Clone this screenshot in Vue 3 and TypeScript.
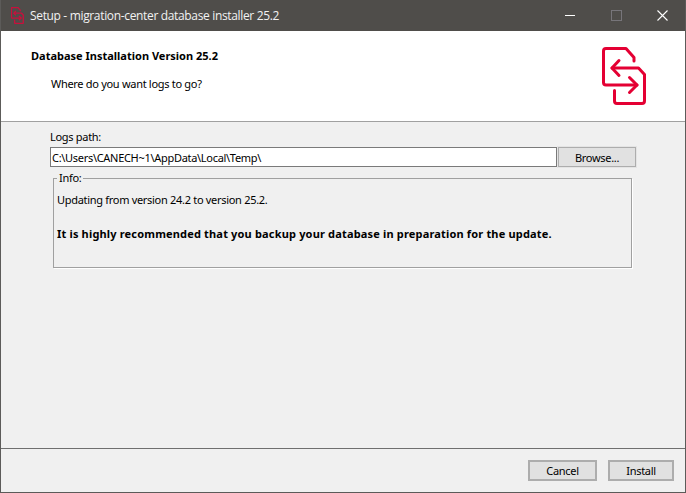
<script setup lang="ts">
import { ref } from 'vue';

const logsPath = ref('C:\\Users\\CANECH~1\\AppData\\Local\\Temp\\');

const firstDoc = 'M32 14 V10.5 L24 1.5 H4 Q1.5 1.5 1.5 4 V35.5 Q1.5 38 4 38 H35';
const firstArrow = 'M27.5 30.5 L35 38 L27.5 45.5';
const secondDoc = 'M10 21 H36.5 L42.5 27.5 V54 Q42.5 56.5 40 56.5 H15 Q12.5 56.5 12.5 54 V43.5';
const secondArrow = 'M17 13.5 L10 21 L17 28.5';
</script>

<template>
    <div class="window">
        <div class="titlebar">
            <svg class="app-icon" viewBox="0 0 45 58" fill="none" stroke="#c8103c" stroke-width="4.6">
                <path :d="firstDoc" />
                <path :d="firstArrow" />
                <path :d="secondDoc" />
                <path :d="secondArrow" />
            </svg>
            <span class="title">Setup - migration-center database installer 25.2</span>
            <div class="controls">
                <div class="control"><span class="minimize"></span></div>
                <div class="control"><span class="maximize"></span></div>
                <div class="control">
                    <svg class="close" viewBox="0 0 11 11" stroke="#fff" stroke-width="1.1">
                        <path d="M0.5 0.5 L10.5 10.5 M10.5 0.5 L0.5 10.5" />
                    </svg>
                </div>
            </div>
        </div>

        <div class="header">
            <div class="header-text">
                <div class="heading">Database Installation Version 25.2</div>
                <div class="subheading">Where do you want logs to go?</div>
            </div>
            <svg class="logo" viewBox="0 0 45 58" fill="none" stroke="#e40033" stroke-width="3"
                stroke-linecap="round" stroke-linejoin="round">
                <path :d="firstDoc" />
                <path :d="firstArrow" />
                <path :d="secondDoc" />
                <path :d="secondArrow" />
            </svg>
        </div>

        <div class="content">
            <label class="path-label">Logs path:</label>
            <div class="path-row">
                <input class="path-input" v-model="logsPath" />
                <button class="btn browse">Browse...</button>
            </div>
            <fieldset class="info">
                <legend>Info:</legend>
                <p class="info-line">Updating from version 24.2 to version 25.2.</p>
                <p class="info-warning">It is highly recommended that you backup your database in preparation for the update.</p>
            </fieldset>
        </div>

        <div class="footer">
            <button class="btn cancel">Cancel</button>
            <button class="btn install">Install</button>
        </div>
    </div>
</template>

<style scoped>
.window {
    width: 686px;
    height: 493px;
    box-sizing: border-box;
    display: flex;
    flex-direction: column;
    border: 1px solid #5c5b59;
    border-top: 0;
    background-color: #f0f0f0;
    color: #000;
    font-family: "Noto Sans", sans-serif;
    font-size: 11px;
    letter-spacing: -0.3px;
    overflow: hidden;
}

.titlebar {
    height: 31px;
    flex: none;
    display: flex;
    align-items: center;
    background-color: #4f4d4a;
    padding-left: 10px;
}

.app-icon {
    width: 13px;
    height: 17px;
    flex: none;
}

.title {
    margin-left: 6px;
    color: #f2f2f2;
    font-family: "Open Sans", sans-serif;
    font-size: 12px;
    letter-spacing: -0.34px;
    white-space: nowrap;
}

.controls {
    margin-left: auto;
    display: flex;
}

.control {
    width: 46px;
    height: 31px;
    display: flex;
    align-items: center;
    justify-content: center;
}

.minimize {
    width: 10px;
    height: 1px;
    background-color: #fff;
}

.maximize {
    width: 9px;
    height: 9px;
    border: 1px solid #77757a;
}

.close {
    width: 11px;
    height: 11px;
}

.header {
    height: 90px;
    flex: none;
    box-sizing: content-box;
    display: flex;
    justify-content: space-between;
    background-color: #fff;
    border-bottom: 1px solid #a0a0a0;
}

.header-text {
    padding: 17px 0 0 30px;
}

.heading {
    font-weight: 700;
    letter-spacing: 0;
    line-height: 15px;
}

.subheading {
    margin: 13px 0 0 20px;
    line-height: 15px;
}

.logo {
    width: 45px;
    height: 58px;
    margin: 16px 38px 0 0;
    flex: none;
}

.content {
    flex: 1;
    display: flex;
    flex-direction: column;
    padding: 7px 49px 0 49px;
}

.path-label {
    line-height: 15px;
}

.path-row {
    margin-top: 3px;
    display: flex;
    height: 20px;
}

.path-input {
    width: 507px;
    height: 20px;
    box-sizing: border-box;
    border: 1px solid #7a7a7a;
    background-color: #fff;
    padding: 0 0 0 1px;
    outline: none;
    font: inherit;
    letter-spacing: inherit;
    color: #000;
}

.btn {
    box-sizing: border-box;
    background-color: #e1e1e1;
    border: 2px solid #adadad;
    padding: 0;
    font: inherit;
    letter-spacing: inherit;
    color: #000;
}

.browse {
    width: 78px;
    height: 20px;
    margin-left: 1px;
    border-width: 1px;
    outline: 1px solid #e4e4e4;
}

.info {
    margin: 4px 0 0 3px;
    padding: 0 0 0 3px;
    width: 579px;
    height: 97px;
    box-sizing: border-box;
    border: 1px solid #a0a0a0;
    box-shadow: 1px 1px 0 #fff;
    min-width: 0;
}

.info legend {
    margin-left: 0;
    padding: 0 2px;
    line-height: 14px;
}

.info p {
    margin: 0;
    line-height: 15px;
}

.info-line {
    padding-top: 7px;
}

.info .info-warning {
    margin-top: 19px;
    font-weight: 700;
    letter-spacing: 0.17px;
}

.footer {
    height: 44px;
    flex: none;
    box-sizing: border-box;
    display: flex;
    justify-content: flex-end;
    align-items: flex-start;
    padding: 11px 11px 0 0;
    border-top: 1px solid #6f6f6f;
}

.cancel {
    width: 69px;
    height: 21px;
}

.install {
    width: 66px;
    height: 21px;
    margin-left: 11px;
}
</style>

<style>
html, body {
    margin: 0;
    background: #f0f0f0;
}
</style>
